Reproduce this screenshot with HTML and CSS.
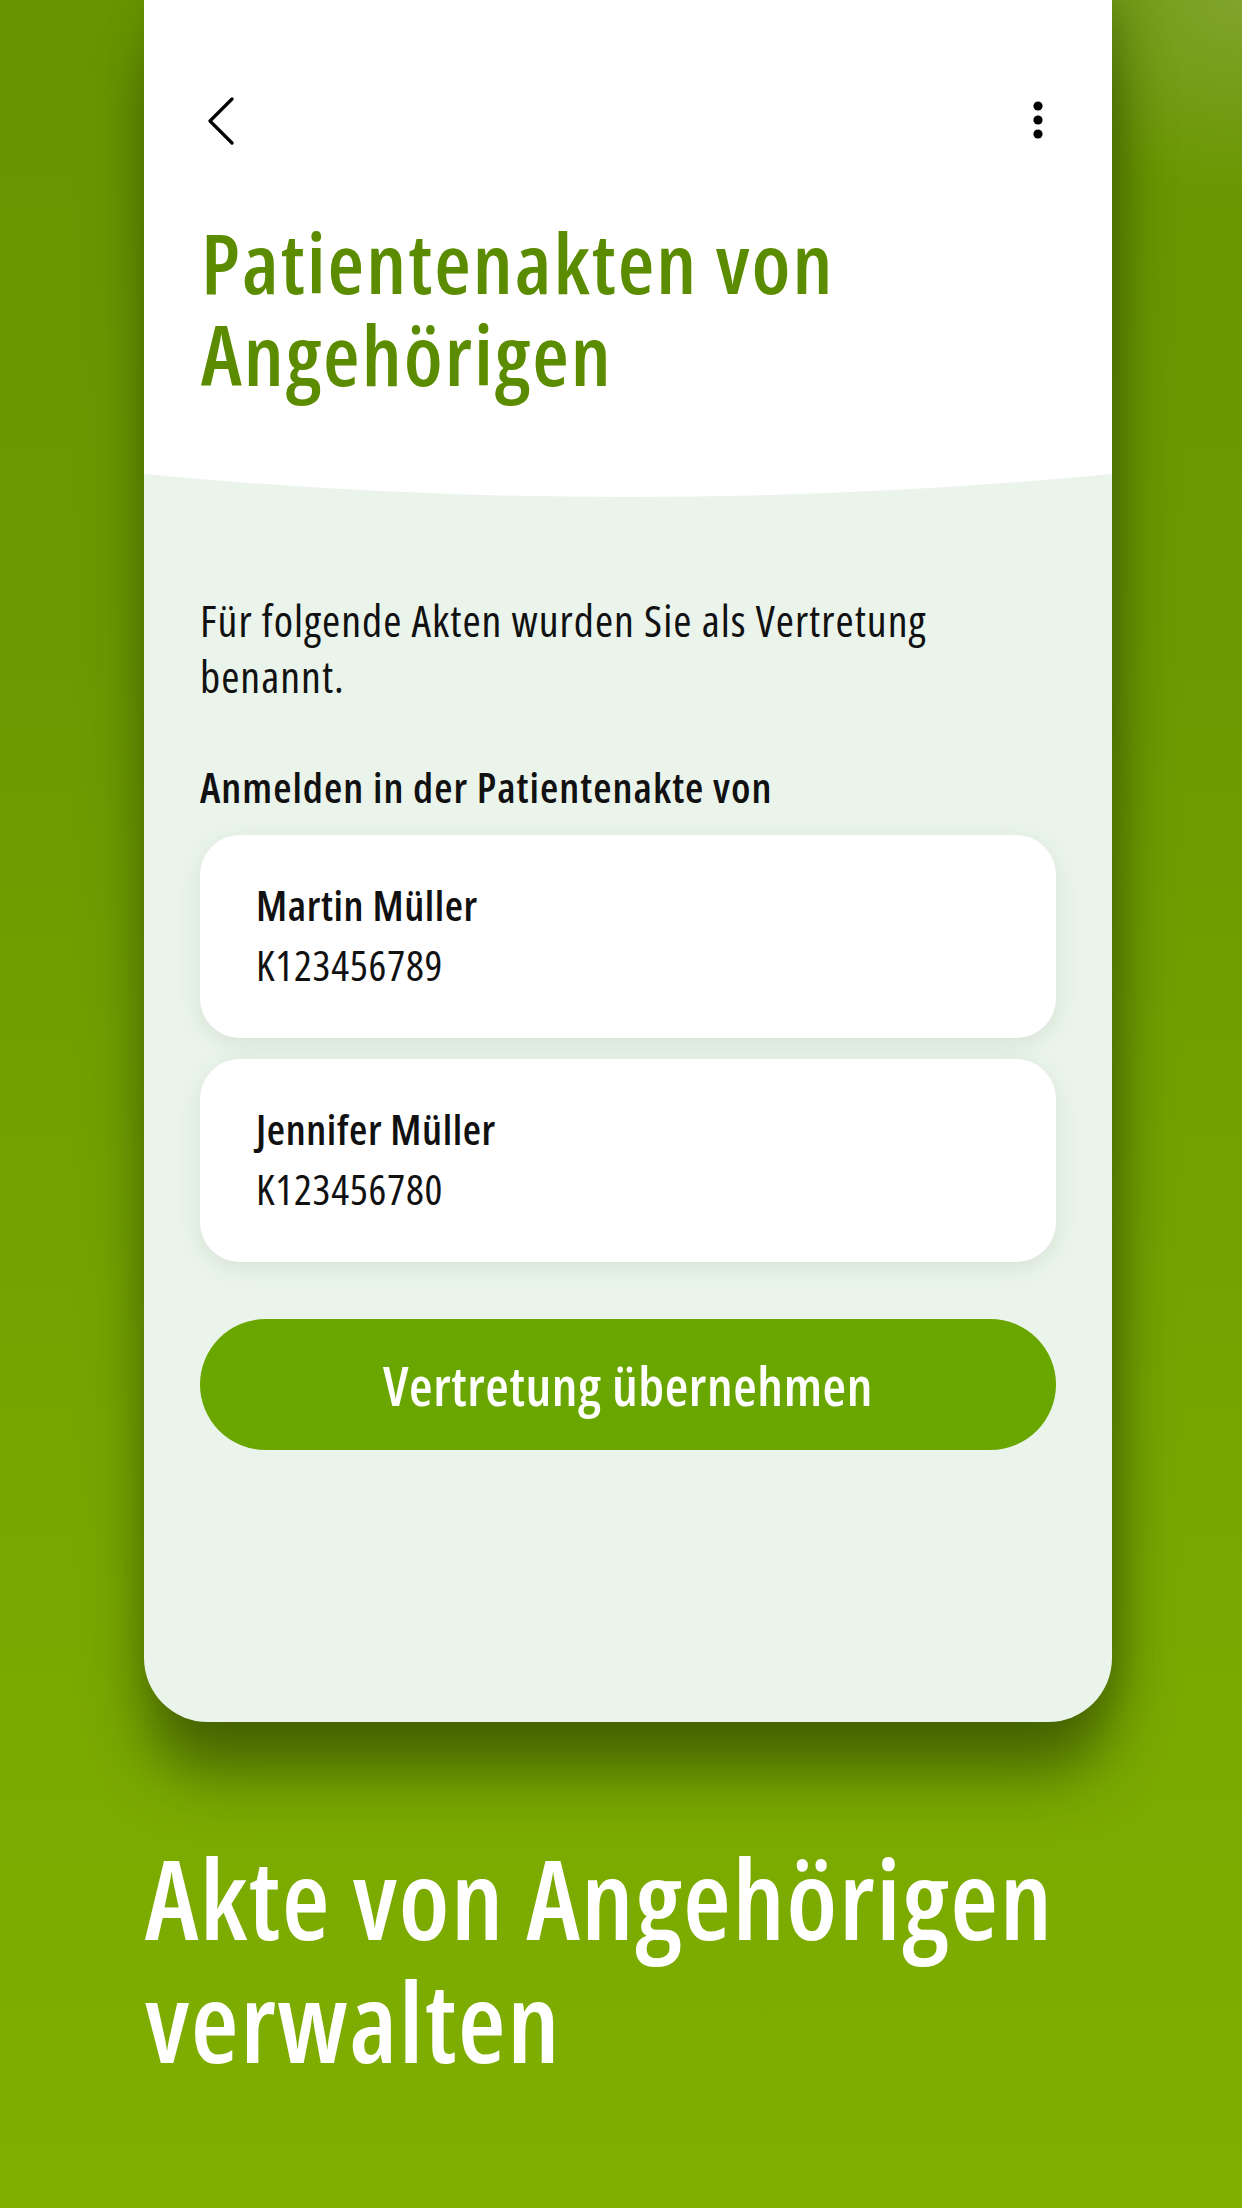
FILE: index.html
```html
<!DOCTYPE html>
<html lang="de">
<head>
<meta charset="utf-8">
<title>Akte von Angehörigen verwalten</title>
<link rel="stylesheet" href="styles.css">
</head>
<body>
<div class="page">
  <div class="phone">
    <header class="phone-header">
      <div class="toolbar">
        <svg class="icon-back" width="28" height="48" viewBox="0 0 28 48"><path d="M25 2 L3 24 L25 46" fill="none" stroke="#000" stroke-width="3.2" stroke-linecap="round" stroke-linejoin="round"/></svg>
        <svg class="icon-more" width="12" height="40" viewBox="0 0 12 40"><circle cx="6" cy="6" r="4.6"/><circle cx="6" cy="20" r="4.6"/><circle cx="6" cy="34" r="4.6"/></svg>
      </div>
      <h1 class="title">Patientenakten von<br>Angehörigen</h1>
    </header>
    <svg class="curve" viewBox="0 0 968 23" preserveAspectRatio="none"><path d="M0 0 H968 Q484 46 0 0 Z" fill="#fff"/></svg>
    <main class="content">
      <p class="intro">Für folgende Akten wurden Sie als Vertretung benannt.</p>
      <p class="label">Anmelden in der Patientenakte von</p>
      <div class="cards">
        <div class="card">
          <div class="card-name">Martin Müller</div>
          <div class="card-id">K123456789</div>
        </div>
        <div class="card">
          <div class="card-name">Jennifer Müller</div>
          <div class="card-id">K123456780</div>
        </div>
      </div>
      <button class="btn">Vertretung übernehmen</button>
    </main>
  </div>
  <h2 class="headline">Akte von Angehörigen<br>verwalten</h2>
</div>
</body>
</html>
```

FILE: styles.css
```css
* { box-sizing: border-box; }
html, body { margin: 0; padding: 0; }
body {
  font-family: "Open Sans", sans-serif;
  font-stretch: 75%;
}
.page {
  width: 1242px;
  height: 2208px;
  overflow: hidden;
  background:
    radial-gradient(ellipse 360px 260px at 1242px 0px, rgba(150,175,80,0.55), rgba(150,175,80,0) 75%),
    linear-gradient(180deg, #689500 0%, #6b9900 30%, #75a400 60%, #80af00 100%);
}
.phone {
  width: 968px;
  margin-left: 144px;
  background: #eaf4eb;
  border-radius: 0 0 64px 64px;
  overflow: hidden;
  box-shadow: 0 55px 60px -5px rgba(60, 85, 0, 0.8), 10px 0 40px rgba(50, 80, 0, 0.4);
}
.phone-header {
  background: #fff;
  padding: 99px 0 74px 57px;
}
.toolbar {
  display: flex;
  justify-content: space-between;
  align-items: flex-start;
  height: 45px;
  padding-left: 6px;
  padding-right: 68px;
}
.icon-back { display: block; margin-top: -2px; }
.icon-more { display: block; margin-top: 1px; }
.title {
  margin: 72px 0 0;
  font-size: 84px;
  line-height: 92px;
  letter-spacing: 2px;
  font-weight: 600;
  color: #5b8c00;
}
.curve {
  display: block;
  width: 968px;
  height: 23px;
}
.content {
  padding: 95px 56px 272px;
}
.intro {
  margin: 0;
  font-size: 44px;
  line-height: 56px;
  letter-spacing: 1px;
  color: #111;
  max-width: 790px;
}
.label {
  margin: 59px 0 0;
  font-size: 42px;
  line-height: 48px;
  letter-spacing: 1px;
  font-weight: 600;
  color: #111;
}
.cards {
  margin-top: 24px;
  display: flex;
  flex-direction: column;
  gap: 21px;
}
.card {
  background: #fff;
  border-radius: 40px;
  padding: 46px 56px 49px;
  box-shadow: 0 6px 24px rgba(60, 90, 40, 0.10);
}
.card-name {
  font-size: 42px;
  line-height: 48px;
  letter-spacing: 0.6px;
  font-weight: 600;
  color: #111;
}
.card-id {
  margin-top: 12px;
  font-size: 42px;
  line-height: 48px;
  letter-spacing: 0.8px;
  color: #111;
}
.btn {
  display: block;
  width: 100%;
  height: 131px;
  margin-top: 57px;
  border: 0;
  border-radius: 66px;
  background: #6aa600;
  color: #fff;
  font-family: inherit;
  font-stretch: inherit;
  font-size: 54px;
  letter-spacing: 0.6px;
  font-weight: 600;
  padding: 0;
}
.headline {
  margin: 114px 0 0 145px;
  font-size: 110px;
  line-height: 123px;
  letter-spacing: 1.5px;
  font-weight: 600;
  color: #fff;
}
```
